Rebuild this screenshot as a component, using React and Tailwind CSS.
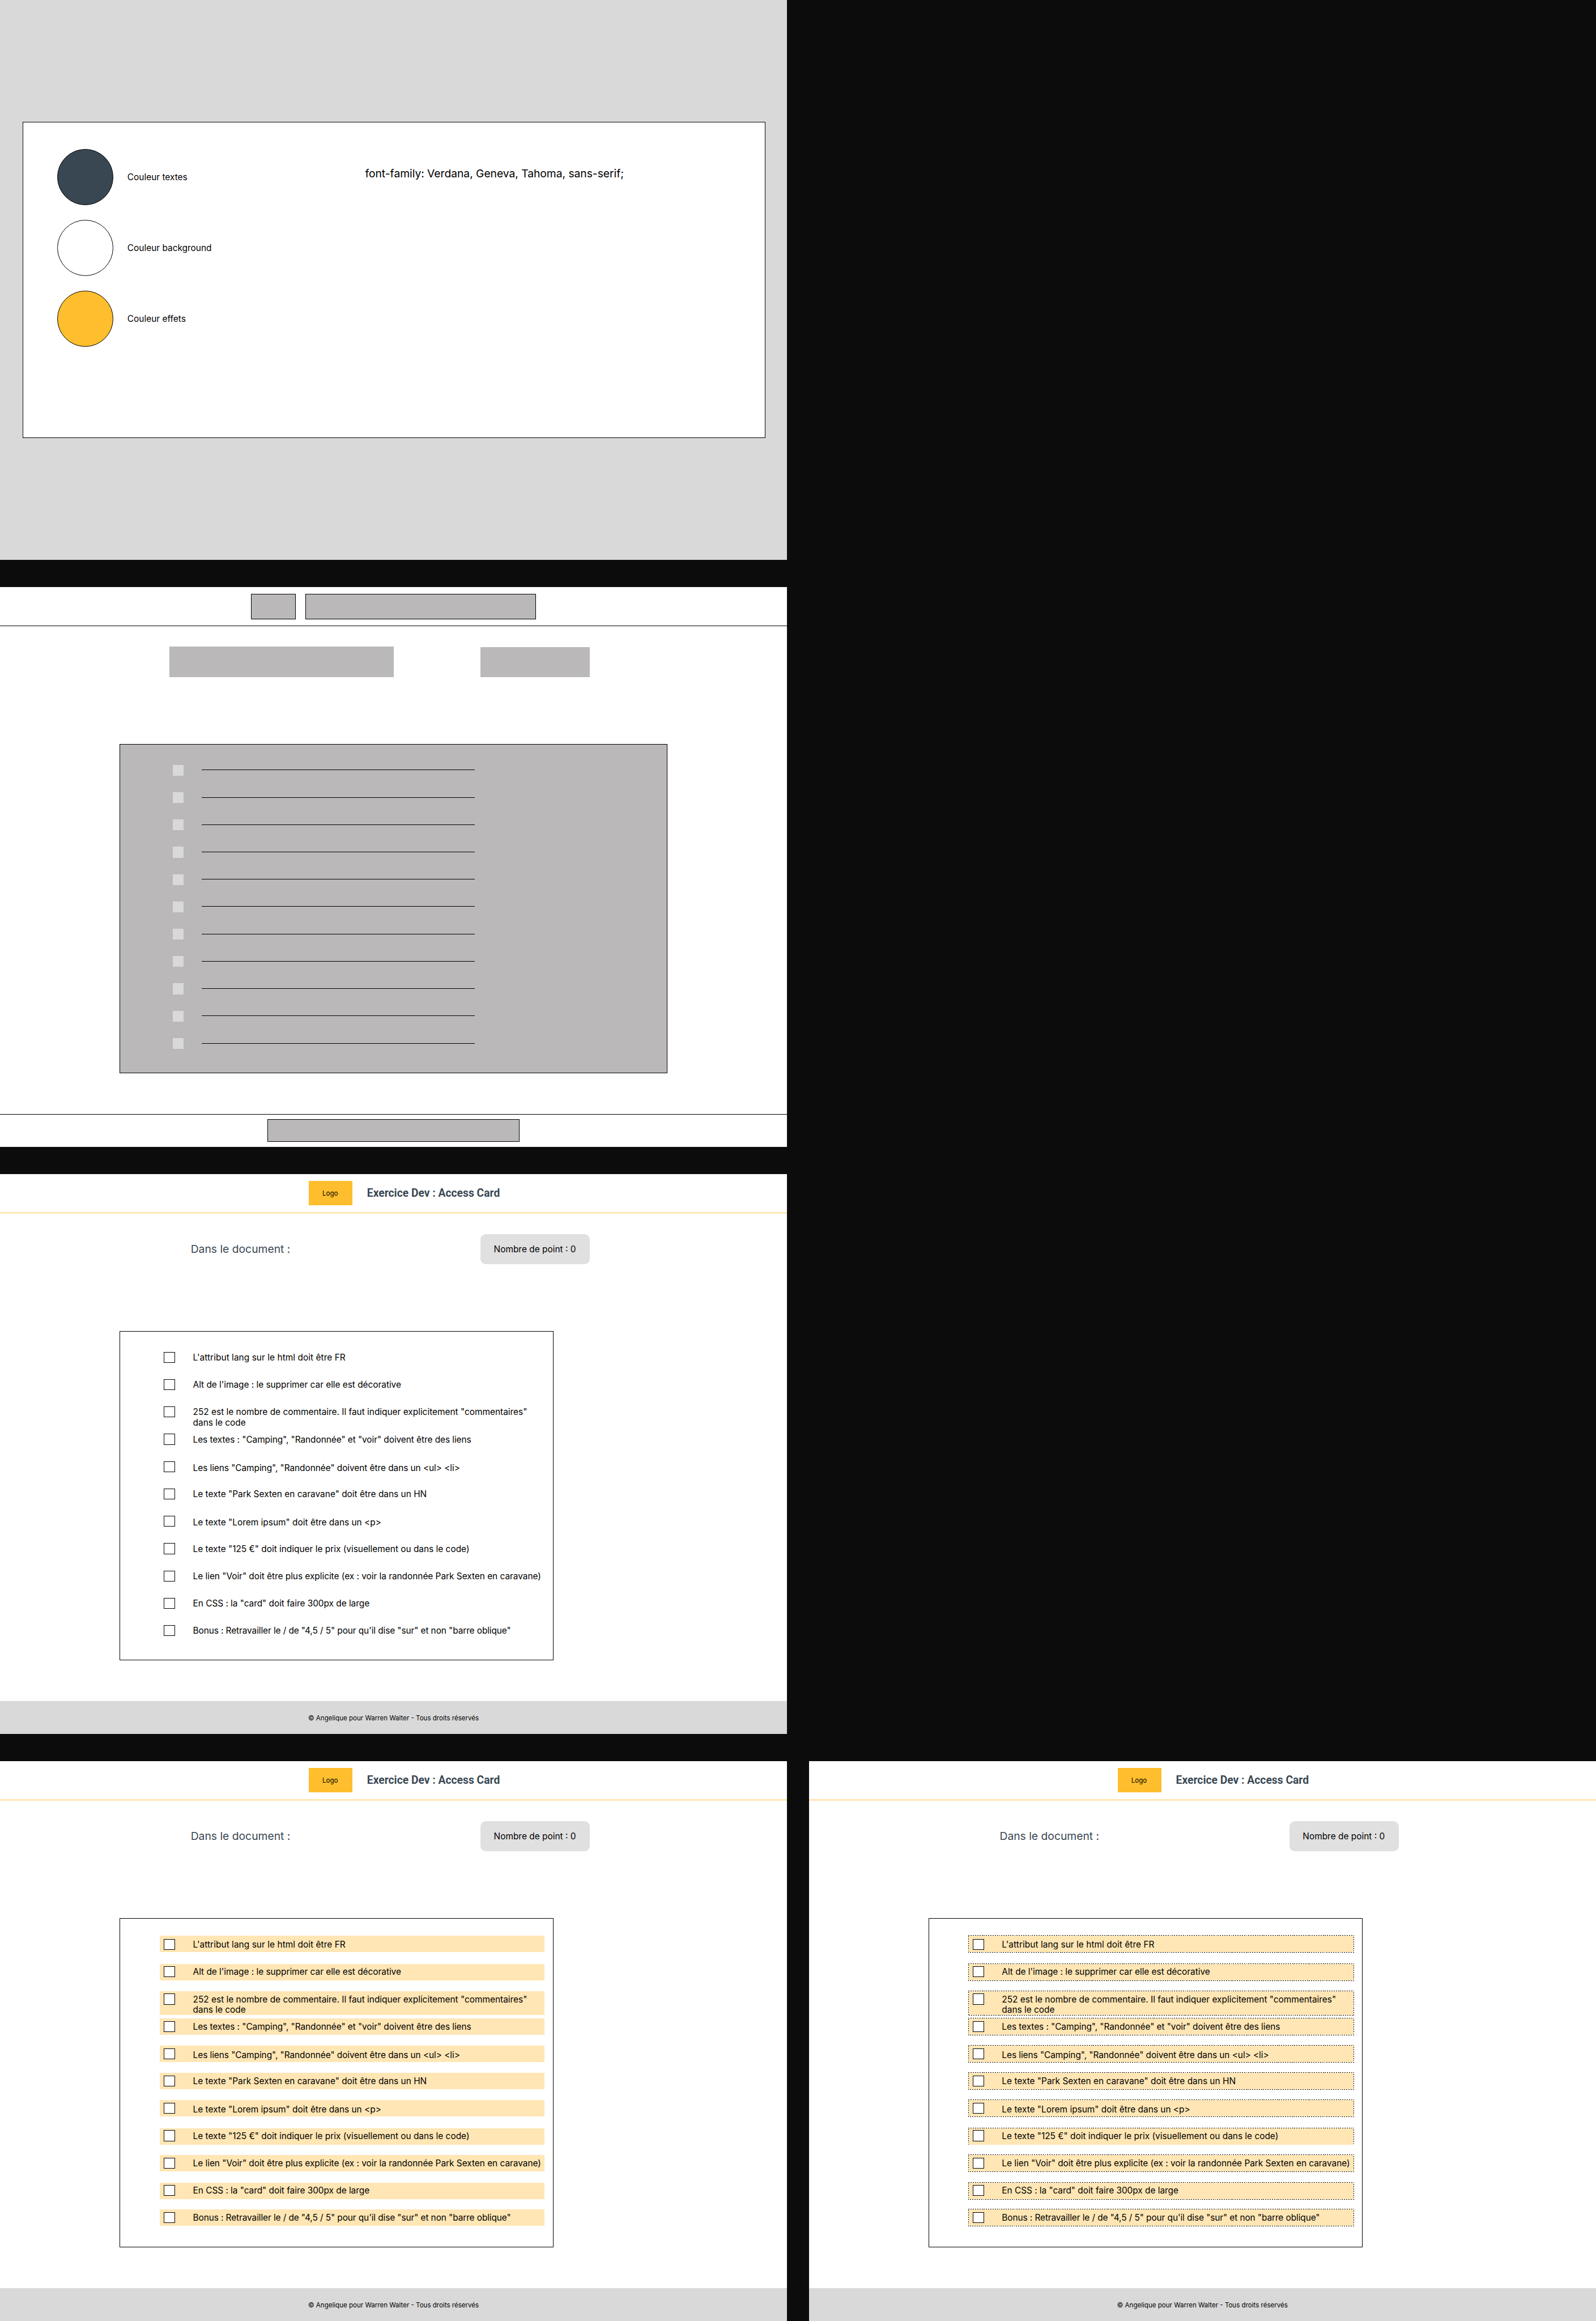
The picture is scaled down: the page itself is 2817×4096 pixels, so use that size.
import React from "react";

/* band: vertical offset of the highlight relative to its checkbox. */
const ITEMS = [
  { text: "L'attribut lang sur le html doit être FR", band: "-top-1.5", tracking: "tracking-[0.05px]" },
  { text: "Alt de l'image : le supprimer car elle est décorative", band: "-top-1", tracking: "tracking-[-0.04px]" },
  { text: '252 est le nombre de commentaire. Il faut indiquer explicitement "commentaires" dans le code', band: "-top-[5px]", tall: true, tracking: "tracking-[-0.01px]" },
  { text: 'Les textes : "Camping", "Randonnée" et "voir" doivent être des liens', band: "-top-[5px]", tracking: "tracking-[-0.07px]" },
  { text: 'Les liens "Camping", "Randonnée" doivent être dans un <ul> <li>', band: "-top-[5px]", low: true, tracking: "tracking-[-0.065px]" },
  { text: 'Le texte "Park Sexten en caravane" doit être dans un HN', band: "-top-[5px]", tracking: "tracking-normal" },
  { text: 'Le texte "Lorem ipsum" doit être dans un <p>', band: "-top-[5px]", low: true, tracking: "tracking-normal" },
  { text: 'Le texte "125 €" doit indiquer le prix (visuellement ou dans le code)', band: "-top-1", tracking: "tracking-[-0.01px]" },
  { text: 'Le lien "Voir" doit être plus explicite (ex : voir la randonnée Park Sexten en caravane)', band: "-top-[5px]", tracking: "tracking-[-0.035px]" },
  { text: 'En CSS : la "card" doit faire 300px de large', band: "-top-1", tracking: "tracking-[-0.04px]" },
  { text: `Bonus : Retravailler le / de "4,5 / 5" pour qu'il dise "sur" et non "barre oblique"`, band: "-top-[5px]", tracking: "tracking-[-0.1px]" },
];

const SWATCHES = [
  { label: "Couleur textes", color: "bg-[#394753]" },
  { label: "Couleur background", color: "bg-white" },
  { label: "Couleur effets", color: "bg-[#ffbe2d]" },
];

function Palette() {
  return (
    <section className="h-[1024px] w-[1440px] bg-[#d9d9d9] pt-[223px] pl-[41px]">
      <div className="flex h-[578px] w-[1359px] border border-black bg-white pt-[49px] pl-[63px]">
        <ul className="flex w-[563px] flex-col gap-[27.5px]">
          {SWATCHES.map((s) => (
            <li key={s.label} className="flex items-center gap-[26px]">
              <span className={`size-[102px] rounded-full border border-black ${s.color}`} />
              <span className="text-base">{s.label}</span>
            </li>
          ))}
        </ul>
        <p className="pt-[33px] text-xl leading-6 tracking-[-0.04px]">font-family: Verdana, Geneva, Tahoma, sans-serif;</p>
      </div>
    </section>
  );
}

function Wireframe() {
  return (
    <section className="flex h-[1024px] w-[1440px] flex-col bg-white">
      <header className="flex h-[71px] justify-center gap-[18px] border-b border-black pt-3">
        <div className="h-[47px] w-[82px] border border-black bg-[#bab8b9]" />
        <div className="h-[47px] w-[422px] border border-black bg-[#bab8b9]" />
      </header>
      <div className="flex h-[216px] items-start gap-[159px] pt-[38px] pl-[310px]">
        <div className="h-14 w-[410px] bg-[#bab8b9]" />
        <div className="mt-px h-[55px] w-[200px] bg-[#bab8b9]" />
      </div>
      <ul className="mx-auto flex h-[602px] w-[1002px] flex-col gap-[30px] border border-black bg-[#bab8b9] pt-[37px] pl-24">
        {ITEMS.map((item) => (
          <li key={item.text} className="flex h-5 gap-[33px]">
            <span className="size-5 bg-[#d9d9d9]" />
            <span className="mt-[9px] h-px w-[500px] bg-black" />
          </li>
        ))}
      </ul>
      <footer className="mt-auto flex h-[60px] justify-center border-t border-black pt-2">
        <div className="h-[42px] w-[462px] border border-black bg-[#bab8b9]" />
      </footer>
    </section>
  );
}

function Band({ item, dashed }) {
  return (
    <div className={`absolute -left-2 w-[704px] bg-[#ffe6b4] ${item.band} ${item.tall ? "h-11" : "h-[30px]"}`}>
      {dashed && (
        <svg className="absolute -inset-px h-[calc(100%+2px)] w-[706px]" fill="none" shapeRendering="crispEdges">
          <rect className="h-[calc(100%-1px)] w-[705px]" x="0.5" y="0.5" stroke="black" strokeDasharray="2 2" />
        </svg>
      )}
    </div>
  );
}

function Row({ item, mode }) {
  return (
    <li className="relative h-5">
      {mode !== "none" && <Band item={item} dashed={mode === "dashed"} />}
      <div className="relative flex">
        <span className="size-5 shrink-0 border border-black bg-white" />
        <span className={`ml-[33px] w-[645px] text-base leading-[19.4px] ${item.tracking} ${item.low ? "pt-[3px]" : "pt-[1.3px]"}`}>{item.text}</span>
      </div>
    </li>
  );
}

function Checklist({ mode }) {
  return (
    <section className="flex h-[1024px] w-[1440px] flex-col bg-white">
      <header className="flex h-[71px] gap-[26.5px] border-b border-[#ffbe2d] pt-3 pl-[565px]">
        <div className="flex h-[45px] w-20 items-center justify-center bg-[#ffbe2d] pt-0.5 pr-0.5 text-xs">Logo</div>
        <h1 className="font-['Roboto',sans-serif] text-xl leading-[45px] font-bold text-[#394753]">Exercice Dev : Access Card</h1>
      </header>
      <div className="flex h-[216px] items-start pt-[39px] pl-[349px]">
        <p className="w-[530px] text-xl leading-[55px] text-[#394753]">Dans le document :</p>
        <div className="h-[55px] w-[200px] rounded-[10px] bg-[#e0e0e0] pr-px text-center text-base leading-[57px]">Nombre de point : 0</div>
      </div>
      <ul className="ml-[219px] flex h-[602px] w-[794px] flex-col gap-[30px] border border-black pt-[37px] pl-20">
        {ITEMS.map((item) => (
          <Row key={item.text} item={item} mode={mode} />
        ))}
      </ul>
      <footer className="mt-auto h-[60px] bg-[#d9d9d9] text-center text-xs leading-[63px]">
        © Angelique pour Warren Walter - Tous droits réservés
      </footer>
    </section>
  );
}

export default function App() {
  return (
    <main className="flex h-[4246px] w-[2920px] flex-col gap-[50px] overflow-hidden bg-[#0c0c0c] font-['Inter',sans-serif] text-black [zoom:0.96473]">
      <Palette />
      <Wireframe />
      <Checklist mode="none" />
      <div className="flex gap-10">
        <Checklist mode="fill" />
        <Checklist mode="dashed" />
      </div>
    </main>
  );
}
